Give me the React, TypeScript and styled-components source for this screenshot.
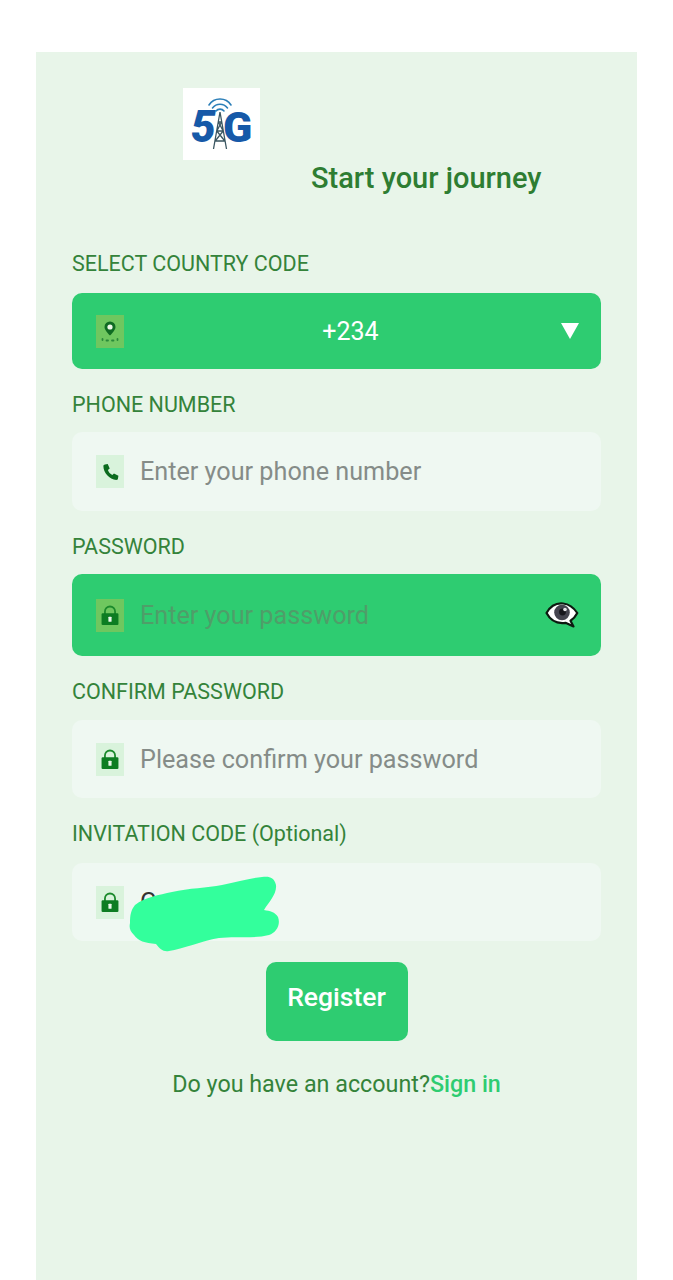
import React from "react";
import styled, { createGlobalStyle } from "styled-components";

const Global = createGlobalStyle`
  html, body { margin: 0; padding: 0; background: #fff; }
  body { font-family: Roboto, "Liberation Sans", sans-serif; }
`;

const Page = styled.div`
  height: 1280px;
  padding: 52px 36px 0;
  box-sizing: border-box;
  overflow: hidden;
  background: #fff;
`;

const Panel = styled.main`
  width: 601px;
  height: 1228px;
  box-sizing: border-box;
  padding: 36px 36px 0;
  background: #e8f5e9;
  display: flex;
  flex-direction: column;
`;

const LogoBox = styled.div`
  width: 77px;
  height: 72px;
  margin-left: 111px;
  background: #fff;
  position: relative;
  overflow: hidden;
`;

const LogoFive = styled.span`
  position: absolute;
  top: 17px;
  left: 8px;
  font: italic 900 44px/44px Roboto, "Liberation Sans", sans-serif;
  color: #1659a8;
`;

const LogoG = styled.span`
  position: absolute;
  top: 17px;
  left: 40px;
  font: 900 43px/44px Roboto, "Liberation Sans", sans-serif;
  color: #1659a8;
`;

const LogoTower = styled.svg`
  position: absolute;
  left: 21px;
  top: 8px;
`;

const Title = styled.h1`
  margin: 1px 0 0 239px;
  font-size: 29px;
  line-height: 34px;
  font-weight: 500;
  color: #2e7d32;
  white-space: nowrap;
`;

const Label = styled.label<{ $top: number; $gap: number }>`
  display: block;
  height: 24px;
  line-height: 24px;
  margin-top: ${(p) => p.$top}px;
  margin-bottom: ${(p) => p.$gap}px;
  font-size: 21.5px;
  color: #34833a;
  white-space: nowrap;
`;

const Field = styled.div<{ $height: number; $active?: boolean }>`
  position: relative;
  height: ${(p) => p.$height}px;
  box-sizing: border-box;
  padding: 0 22px 0 24px;
  display: flex;
  align-items: center;
  border-radius: 10px;
  background: ${(p) => (p.$active ? "#2ecc71" : "#eff8f2")};
`;

const IconBox = styled.span<{ $active?: boolean }>`
  flex: none;
  width: 28px;
  height: 33px;
  margin-right: 16px;
  display: flex;
  align-items: center;
  justify-content: center;
  background: ${(p) => (p.$active ? "#6fc75f" : "#d9f3dc")};
`;

const Input = styled.input<{ $active?: boolean }>`
  flex: 1;
  min-width: 0;
  border: 0;
  outline: 0;
  padding: 0;
  background: transparent;
  font: 400 25.2px Roboto, "Liberation Sans", sans-serif;
  color: #333;
  &::placeholder {
    color: ${(p) => (p.$active ? "#4f9e69" : "#858c88")};
    opacity: 1;
  }
`;

const SelectValue = styled.span`
  flex: 1;
  text-align: center;
  font-size: 25px;
  color: #fff;
`;

const Scribble = styled.svg`
  position: absolute;
  left: 55px;
  top: 10px;
`;

const RegisterButton = styled.button`
  align-self: center;
  width: 142px;
  height: 79px;
  margin-top: 21px;
  padding: 0 0 10px;
  border: 0;
  border-radius: 10px;
  background: #2ecc71;
  color: #fff;
  font: 500 26.5px Roboto, "Liberation Sans", sans-serif;
`;

const Footer = styled.p`
  margin: 29px 0 0;
  height: 28px;
  line-height: 28px;
  text-align: center;
  font-size: 23.3px;
  color: #34833a;
`;

const SignIn = styled.a`
  color: #2ecc71;
  font-weight: 500;
`;

const Lock = () => (
  <svg width="18" height="21" viewBox="0 0 16 18">
    <path d="M3.5 8V5.5a4.5 4.5 0 0 1 9 0V8" fill="none" stroke="#1b8a2c" strokeWidth="1.6" />
    <rect x="0.5" y="7" width="15" height="10.5" rx="1" fill="#0d7d22" />
    <rect x="6.6" y="10" width="2.8" height="4.6" rx="0.6" fill="#eaf7ea" />
  </svg>
);

const Pin = () => (
  <svg width="22" height="24" viewBox="0 0 22 24">
    <path d="M11 2.500a5.500 5.500 0 0 0-5.500 5.500c0 3.600 5.500 8.500 5.500 8.500s5.500-4.900 5.500-8.500a5.500 5.500 0 0 0-5.500-5.500z" fill="#0f6b22" />
    <circle cx="11" cy="8" r="2.600" fill="#eef8e8" />
    <path d="M3.500 20v1M7.500 21.500h1.500M13 21.500h1.500M18.500 20v1" stroke="#2a8a3a" strokeWidth="1.800" strokeLinecap="round" />
  </svg>
);

const Phone = () => (
  <svg width="19" height="22" viewBox="0 0 24 24">
    <path
      fill="#0b6b1e"
      d="M5 2.500 8.500 2l2.500 5.500-2.300 2c.9 2.600 2.900 5 5.600 6.400l2.100-2L22 16.800l-.6 3.700c-.2 1-1 1.500-2 1.500C10.500 21.500 3 13 3 4.500c0-1 .9-1.800 2-2z"
    />
  </svg>
);

const Eye = () => (
  <svg width="34" height="28" viewBox="0 0 34 28" style={{ marginLeft: "auto" }}>
    <path d="M1.500 12C6 4 13 2 18 2.500c6 .6 11 4.500 14.300 9.500-1.800 3.500-4 6-6.800 7.800l3 5.700-8-3.700C12 23 5.500 19.500 1.500 12z" fill="#fff" stroke="#0c1a10" strokeWidth="2.200" strokeLinejoin="round" />
    <circle cx="17" cy="11.500" r="7.800" fill="#44444e" />
    <circle cx="17.500" cy="11" r="3.400" fill="#17171c" />
    <circle cx="20" cy="8.500" r="1.800" fill="#e6e6ea" />
  </svg>
);

export default function App() {
  return (
    <>
      <Global />
      <Page>
        <Panel>
          <LogoBox>
            <LogoFive>5</LogoFive>
            <LogoG>G</LogoG>
            <LogoTower width="32" height="56" viewBox="0 0 32 56">
              <g fill="none" stroke="#2c7fb8" strokeWidth="1.600" strokeLinecap="round">
                <path d="M5 9C10 1 22 1 27 9" />
                <path d="M8.500 12c4-5 11-5 15 0" />
                <path d="M12 15c2-2.500 6-2.500 8 0" />
              </g>
              <path d="M16 17 9 54h14z" fill="#fff" />
              <g fill="none" stroke="#3a5560" strokeWidth="1.300">
                <path d="M16 16 9.500 53M16 16l6.500 37M12.800 35h6.400M11.200 45h9.600M14.400 26h3.200M12.800 35 20.800 45M19.200 35 11.200 45M14.400 26l4.800 9M17.600 26l-4.800 9" />
              </g>
            </LogoTower>
          </LogoBox>
          <Title>Start your journey</Title>

          <Label $top={57} $gap={17}>SELECT COUNTRY CODE</Label>
          <Field $height={76} $active>
            <IconBox $active><Pin /></IconBox>
            <SelectValue>+234</SelectValue>
            <svg width="18" height="16" viewBox="0 0 18 16"><path d="M0 0h18L9 16z" fill="#fff" /></svg>
          </Field>

          <Label $top={24} $gap={15}>PHONE NUMBER</Label>
          <Field $height={79}>
            <IconBox><Phone /></IconBox>
            <Input placeholder="Enter your phone number" />
          </Field>

          <Label $top={24} $gap={15}>PASSWORD</Label>
          <Field $height={82} $active>
            <IconBox $active><Lock /></IconBox>
            <Input $active type="password" placeholder="Enter your password" />
            <Eye />
          </Field>

          <Label $top={24} $gap={16}>CONFIRM PASSWORD</Label>
          <Field $height={78}>
            <IconBox><Lock /></IconBox>
            <Input type="password" placeholder="Please confirm your password" />
          </Field>

          <Label $top={24} $gap={17}>INVITATION CODE (Optional)</Label>
          <Field $height={78}>
            <IconBox><Lock /></IconBox>
            <Input defaultValue="C" />
            <Scribble width="160" height="84" viewBox="0 0 160 84">
              <path
                fill="#33ff9c"
                d="M8 32C18 24 32 22 45 19 62 15 80 15 95 12 110 9 124 5 135 4c7-1 12 0 14 8 1 9-7 17-12 25 6 1 11 2 14 7 3 8-2 16-9 18-16 4-34 1-50 3-18 3-36 11-50 13-6 1-9-2-13-7C18 70 11 68 7 62 3 58 2 55 3 50 3 42 4 37 8 32z"
              />
            </Scribble>
          </Field>

          <RegisterButton>Register</RegisterButton>
          <Footer>
            Do you have an account?<SignIn>Sign in</SignIn>
          </Footer>
        </Panel>
      </Page>
    </>
  );
}
